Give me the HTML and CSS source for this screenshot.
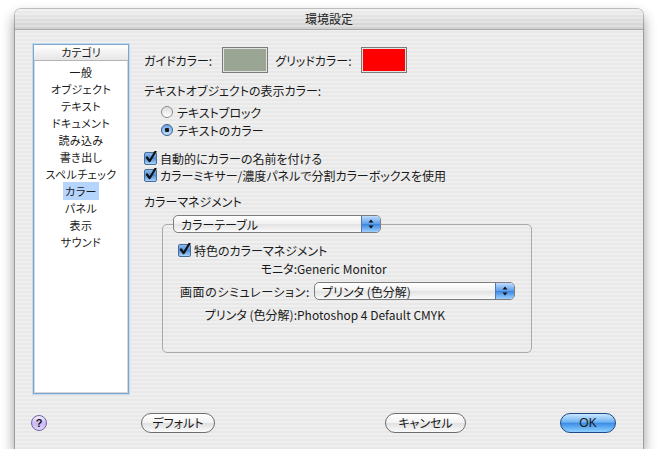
FILE: index.html
```html
<!DOCTYPE html>
<html lang="ja">
<head>
<meta charset="utf-8">
<title>環境設定</title>
<link rel="stylesheet" href="styles.css">
</head>
<body>
<div class="window">
    <div class="titlebar">環境設定</div>
    <div class="content">
        <div class="main">
            <div class="category-list">
                <div class="category-header">カテゴリ</div>
                <ul class="categories">
                    <li>一般</li>
                    <li>オブジェクト</li>
                    <li>テキスト</li>
                    <li>ドキュメント</li>
                    <li>読み込み</li>
                    <li>書き出し</li>
                    <li>スペルチェック</li>
                    <li><span class="selected">カラー</span></li>
                    <li>パネル</li>
                    <li>表示</li>
                    <li>サウンド</li>
                </ul>
            </div>

            <div class="settings">
                <div class="swatch-row">
                    <span class="label">ガイドカラー:</span>
                    <span class="swatch swatch-guide"></span>
                    <span class="label label-grid">グリッドカラー:</span>
                    <span class="swatch swatch-grid"></span>
                </div>

                <div class="heading heading-text">テキストオブジェクトの表示カラー:</div>
                <div class="radio-group">
                    <div class="option"><span class="radio"></span>テキストブロック</div>
                    <div class="option"><span class="radio radio-on"></span>テキストのカラー</div>
                </div>

                <div class="check-group">
                    <div class="option">
                        <span class="checkbox"><svg viewBox="0 0 13 13" width="13" height="13"><path d="M3 6.5 L5.6 10.2 L11.5 0.5" fill="none" stroke="#111" stroke-width="2.2" stroke-linecap="round" stroke-linejoin="round"/></svg></span>自動的にカラーの名前を付ける
                    </div>
                    <div class="option">
                        <span class="checkbox"><svg viewBox="0 0 13 13" width="13" height="13"><path d="M3 6.5 L5.6 10.2 L11.5 0.5" fill="none" stroke="#111" stroke-width="2.2" stroke-linecap="round" stroke-linejoin="round"/></svg></span>カラーミキサー/濃度パネルで分割カラーボックスを使用
                    </div>
                </div>

                <div class="heading heading-cm">カラーマネジメント</div>
                <fieldset class="group">
                    <legend>
                        <span class="popup popup-table">カラーテーブル<span class="popup-arrows"><svg viewBox="0 0 8 12" width="8" height="12"><path d="M4 1.5 L6.5 4.5 L1.5 4.5 Z M4 10.5 L6.5 7.5 L1.5 7.5 Z" fill="#111"/></svg></span></span>
                    </legend>
                    <div class="option spot-row">
                        <span class="checkbox"><svg viewBox="0 0 13 13" width="13" height="13"><path d="M3 6.5 L5.6 10.2 L11.5 0.5" fill="none" stroke="#111" stroke-width="2.2" stroke-linecap="round" stroke-linejoin="round"/></svg></span>特色のカラーマネジメント
                    </div>
                    <div class="info-row">
                        <span class="info-label">モニタ:</span>Generic Monitor
                    </div>
                    <div class="sim-row">
                        <span class="sim-label">画面のシミュレーション:</span>
                        <span class="popup popup-sim">プリンタ (色分解)<span class="popup-arrows"><svg viewBox="0 0 8 12" width="8" height="12"><path d="M4 1.5 L6.5 4.5 L1.5 4.5 Z M4 10.5 L6.5 7.5 L1.5 7.5 Z" fill="#111"/></svg></span></span>
                    </div>
                    <div class="info-row printer-row">
                        <span class="info-label">プリンタ (色分解):</span>Photoshop 4 Default CMYK
                    </div>
                </fieldset>
            </div>
        </div>

        <div class="footer">
            <span class="help">?</span>
            <span class="button button-default">デフォルト</span>
            <span class="button button-cancel">キャンセル</span>
            <span class="button button-ok">OK</span>
        </div>
    </div>
</div>
</body>
</html>
```

FILE: styles.css
```css
body {
    margin: 0;
    background-color: #ffffff;
    font-family: "Noto Sans CJK JP", "Liberation Sans", sans-serif;
    font-size: 12px;
    color: #1a1a1a;
    font-feature-settings: "palt";
}
.window {
    width: 628px;
    height: 440px;
    margin: 9px 0 0 15px;
    border-radius: 6px 6px 0 0;
    background: repeating-linear-gradient(to bottom, #efefef 0, #efefef 2px, #e8e8e8 2px, #e8e8e8 4px);
    box-shadow: 0 0 0 1px rgba(0, 0, 0, 0.22), 0 7px 14px rgba(0, 0, 0, 0.45);
    overflow: hidden;
}
.titlebar {
    height: 20px;
    line-height: 20px;
    text-align: center;
    font-size: 12px;
    color: #222;
    background:
        repeating-linear-gradient(to bottom, rgba(255,255,255,0.25) 0, rgba(255,255,255,0.25) 2px, transparent 2px, transparent 4px),
        linear-gradient(to bottom, #eeeeee, #d0d0d0);
    border-bottom: 1px solid #a8a8a8;
}
.content {
    padding: 14px 0 0 0;
}
.main {
    display: flex;
    padding-left: 18px;
    height: 350px;
}

/* category list */
.category-list {
    width: 96px;
    height: 350px;
    box-sizing: border-box;
    background-color: #ffffff;
    border: 1px solid #7ea6d3;
    box-shadow: 0 0 0 1px #c4d8ee, inset 0 0 0 1px #d6d6d6;
}
.category-header {
    height: 15px;
    line-height: 15px;
    font-size: 11px;
    text-align: center;
    background: linear-gradient(to bottom, #ffffff, #e6e6e6);
    border-bottom: 1px solid #b5b5b5;
}
.categories {
    list-style: none;
    margin: 0;
    padding: 3px 0 0 0;
    text-align: center;
    font-size: 11px;
    line-height: 17px;
    letter-spacing: 0.4px;
}
.selected {
    background-color: #b5d5ff;
    padding: 1px 2px;
}

/* settings */
.settings {
    margin-left: 15px;
    padding-top: 3px;
}
.swatch-row {
    display: flex;
    align-items: center;
    height: 26px;
}
.swatch {
    width: 46px;
    height: 26px;
    box-sizing: border-box;
    border: 1px solid #7a7a7a;
    box-shadow: inset 0 0 0 1px #e2e2e2;
    margin-left: 10px;
}
.swatch-guide {
    background-color: #9ba594;
}
.swatch-grid {
    background-color: #ff0000;
}
.label-grid {
    margin-left: 7px;
}
.heading {
    line-height: 16px;
}
.heading-text {
    margin-top: 10px;
}
.radio-group {
    margin-top: 4px;
    padding-left: 17px;
}
.option {
    display: flex;
    align-items: center;
    height: 18px;
    white-space: nowrap;
}
.radio {
    width: 12px;
    height: 12px;
    box-sizing: border-box;
    border-radius: 50%;
    border: 1px solid #8a8a8a;
    background: linear-gradient(to bottom, #dcdcdc, #ffffff);
    margin-right: 4px;
}
.radio-on {
    border-color: #3b5d8c;
    background: radial-gradient(circle at 50% 50%, #1a1a1a 0, #1a1a1a 2px, transparent 2.5px),
        linear-gradient(to bottom, #6fa8e6, #bfe0ff);
}
.check-group {
    margin-top: 11px;
}
.check-group .option {
    height: 17px;
}
.checkbox {
    width: 13px;
    height: 13px;
    flex-shrink: 0;
    box-sizing: border-box;
    border: 1px solid #4a6c98;
    border-radius: 2px;
    background: linear-gradient(to bottom, #8dbbef, #4f8fd6 50%, #a9d4ff);
    margin-right: 3px;
    position: relative;
}
.checkbox svg {
    position: absolute;
    left: -1px;
    top: -2px;
}
.heading-cm {
    margin-top: 10px;
}

/* group box */
.group {
    width: 370px;
    box-sizing: border-box;
    margin: 5px 0 0 18px;
    padding: 0 8px 29px 15px;
    border: 1px solid #a9a9a9;
    border-radius: 5px;
    min-width: 0;
}
.group legend {
    padding: 0;
    margin-left: -5px;
}
.popup {
    display: flex;
    align-items: center;
    flex-shrink: 0;
    height: 18px;
    box-sizing: border-box;
    border: 1px solid #7d7d7d;
    border-radius: 5px;
    background: linear-gradient(to bottom, #ffffff, #f0f0f0 50%, #e2e2e2 51%, #fafafa);
    padding-left: 7px;
    justify-content: space-between;
    overflow: hidden;
    white-space: nowrap;
}
.popup-table {
    width: 208px;
}
.popup-sim {
    width: 201px;
    margin-left: 2px;
}
.popup-arrows {
    width: 18px;
    height: 16px;
    display: flex;
    align-items: center;
    justify-content: center;
    border-left: 1px solid #4f78ad;
    background: linear-gradient(to bottom, #bfdcff, #5d9de8 50%, #3a84de 51%, #9ed0ff);
}
.spot-row {
    margin-top: 8px;
}
.info-row {
    display: flex;
    align-items: center;
    height: 18px;
    white-space: nowrap;
}
.info-label {
    width: 119px;
    flex-shrink: 0;
    text-align: right;
}
.sim-row {
    display: flex;
    align-items: center;
    height: 18px;
    margin-top: 5px;
    padding-left: 2px;
}
.sim-label {
    width: 132px;
    flex-shrink: 0;
    white-space: nowrap;
    letter-spacing: 0.6px;
}
.printer-row {
    margin-top: 5px;
}

/* footer */
.footer {
    display: flex;
    align-items: center;
    margin-top: 19px;
    padding-left: 16px;
    height: 20px;
}
.help {
    width: 16px;
    height: 16px;
    box-sizing: border-box;
    border-radius: 50%;
    border: 1px solid #6f63a0;
    background: linear-gradient(to bottom, #f4eeff, #c9b8f4 55%, #e3d8ff);
    font-family: "Liberation Sans", sans-serif;
    font-weight: bold;
    font-size: 11px;
    line-height: 14px;
    text-align: center;
    color: #111;
}
.button {
    height: 20px;
    box-sizing: border-box;
    border: 1px solid #6e6e6e;
    border-radius: 10px;
    background: linear-gradient(to bottom, #ffffff, #f2f2f2 50%, #e0e0e0 51%, #fbfbfb);
    line-height: 18px;
    text-align: center;
    font-size: 12px;
}
.button-default {
    width: 74px;
    margin-left: 94px;
}
.button-cancel {
    width: 81px;
    margin-left: 170px;
}
.button-ok {
    width: 56px;
    margin-left: 94px;
    border-color: #1d4a86;
    background: linear-gradient(to bottom, #cbe6ff, #6fb2f2 45%, #3d8ee6 52%, #8ed0ff);
    font-family: "Liberation Sans", sans-serif;
}
```
